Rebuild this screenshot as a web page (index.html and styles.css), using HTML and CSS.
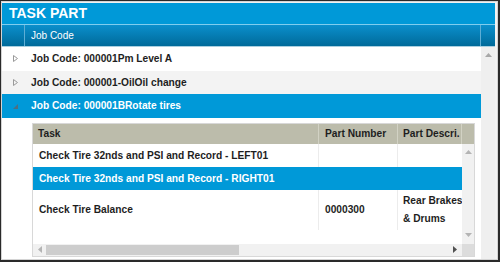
FILE: index.html
```
<!DOCTYPE html>
<html lang="en">
<head>
    <meta charset="UTF-8">
    <title>Task Part</title>
    <link rel="stylesheet" href="styles.css">
</head>
<body>
<div class="frame">
  <div class="panel">
    <div class="title">TASK PART</div>
    <div class="grid-head">
      <div class="hcell expand-col"></div>
      <div class="hcell grow">Job Code</div>
      <div class="hcell scroll-col"></div>
    </div>
    <div class="grid-body">
      <div class="grid-rows">
        <div class="row">
          <div class="expander">
            <svg width="5" height="7" viewBox="0 0 5 7"><path d="M0.5 0.5 L4.5 3.5 L0.5 6.5 Z" fill="none" stroke="#9a9a9a" stroke-width="1"/></svg>
          </div>
          <div class="row-text">Job Code: 000001Pm Level A</div>
        </div>
        <div class="row alt">
          <div class="expander">
            <svg width="5" height="7" viewBox="0 0 5 7"><path d="M0.5 0.5 L4.5 3.5 L0.5 6.5 Z" fill="none" stroke="#9a9a9a" stroke-width="1"/></svg>
          </div>
          <div class="row-text">Job Code: 000001-OilOil change</div>
        </div>
        <div class="row selected">
          <div class="expander">
            <svg width="5" height="5" viewBox="0 0 5 5"><path d="M5 0 L5 5 L0 5 Z" fill="#4f6f80"/></svg>
          </div>
          <div class="row-text">Job Code: 000001BRotate tires</div>
        </div>
        <div class="detail">
          <div class="sub">
            <div class="sub-head">
              <div class="shcell c-task">Task</div>
              <div class="shcell c-num">Part Number</div>
              <div class="shcell c-desc">Part Descri.</div>
              <div class="shcell c-scroll"></div>
            </div>
            <div class="sub-body">
              <div class="sub-rows">
                <div class="srow">
                  <div class="scell c-task">Check Tire 32nds and PSI and Record - LEFT01</div>
                  <div class="scell c-num"></div>
                  <div class="scell c-desc"></div>
                </div>
                <div class="srow selected">
                  <div class="scell c-task">Check Tire 32nds and PSI and Record - RIGHT01</div>
                  <div class="scell c-num"></div>
                  <div class="scell c-desc"></div>
                </div>
                <div class="srow tall">
                  <div class="scell c-task">Check Tire Balance</div>
                  <div class="scell c-num">0000300</div>
                  <div class="scell c-desc"><span class="wrap">Rear Brakes &amp; Drums</span></div>
                </div>
              </div>
              <div class="sub-vscroll">
                <svg width="7" height="4" viewBox="0 0 7 4"><path d="M0 4 L3.5 0 L7 4 Z" fill="#b4b4b4"/></svg>
                <svg width="7" height="4" viewBox="0 0 7 4"><path d="M0 0 L3.5 4 L7 0 Z" fill="#b4b4b4"/></svg>
              </div>
            </div>
            <div class="sub-hscroll">
              <div class="htrack">
                <svg class="arrow-left" width="4" height="7" viewBox="0 0 4 7"><path d="M4 0 L0 3.5 L4 7 Z" fill="#b4b4b4"/></svg>
                <div class="thumb"></div>
                <svg class="arrow-right" width="4" height="7" viewBox="0 0 4 7"><path d="M0 0 L4 3.5 L0 7 Z" fill="#505050"/></svg>
              </div>
              <div class="corner"></div>
            </div>
          </div>
        </div>
      </div>
      <div class="vscroll">
        <svg width="7" height="4" viewBox="0 0 7 4"><path d="M0 4 L3.5 0 L7 4 Z" fill="#a8a8a8"/></svg>
      </div>
    </div>
  </div>
</div>
</body>
</html>
```
FILE: styles.css
```
body {
    margin: 0;
    font-family: "Liberation Sans", Arial, sans-serif;
}
.frame {
    width: 500px;
    height: 262px;
    box-sizing: border-box;
    border-style: solid;
    border-color: #2a2a2a;
    border-width: 1px 2px 2px 1px;
    overflow: hidden;
}
.panel {
    height: 100%;
    box-sizing: border-box;
    border: 1px solid #d4d4d4;
    padding: 1px 2px 0 0;
    background: #f2f2f2;
    display: flex;
    flex-direction: column;
}
.title {
    height: 21px;
    line-height: 21px;
    padding-left: 7px;
    background: #0099d8;
    color: #fff;
    font-size: 14px;
    font-weight: bold;
    border-bottom: 1px solid #7fcdee;
}
.grid-head {
    display: flex;
    height: 21px;
    background: linear-gradient(#0a8fcc, #006a9a);
    border-bottom: 1px solid #a9cfe0;
}
.hcell {
    line-height: 21px;
    color: #fff;
    font-size: 10px;
}
.expand-col {
    width: 22px;
    border-right: 1px solid #5eaed5;
}
.grow {
    flex: 1;
    padding-left: 6px;
}
.scroll-col {
    width: 14px;
    border-left: 1px solid #5eaed5;
}
.grid-body {
    flex: 1;
    display: flex;
    min-height: 0;
}
.grid-rows {
    flex: 1;
    background: #fff;
    overflow: hidden;
}
.row {
    display: flex;
    height: 23.5px;
    line-height: 23.5px;
    font-size: 10.2px;
    font-weight: bold;
    color: #1e1e1e;
}
.row.alt {
    background: #f3f3f3;
}
.row.selected {
    background: #0099d8;
    color: #fff;
}
.expander {
    width: 23px;
    display: flex;
    align-items: center;
    justify-content: center;
    padding-left: 3px;
    box-sizing: border-box;
}
.row.selected .expander {
    padding-top: 2px;
}
.row-text {
    padding-left: 6px;
}
.vscroll {
    width: 14px;
    background: #efefef;
    display: flex;
    justify-content: center;
    padding-top: 6px;
    box-sizing: border-box;
}
.detail {
    padding: 5px 6px 0 30px;
}
.sub {
    border: 1px solid #d8d8d8;
    font-size: 10.2px;
    font-weight: bold;
    color: #1e1e1e;
}
.sub-head {
    display: flex;
    height: 20px;
    background: #bcbcab;
}
.shcell {
    line-height: 20px;
    padding-left: 5px;
    box-sizing: border-box;
    border-right: 1px solid #d2d2c4;
    white-space: nowrap;
    overflow: hidden;
}
.c-task { width: 286px; }
.c-num { width: 79px; padding-left: 6px; }
.c-desc { width: 64px; }
.shcell.c-scroll {
    flex: 1;
    border-right: none;
}
.sub-body {
    display: flex;
    height: 100px;
}
.sub-rows {
    width: 429px;
    overflow: hidden;
}
.srow {
    display: flex;
    height: 23px;
}
.srow.tall {
    height: 40px;
}
.srow.selected {
    background: #0099d8;
    color: #fff;
}
.scell {
    box-sizing: border-box;
    padding-left: 6px;
    border-right: 1px solid #ececec;
    display: flex;
    align-items: center;
    white-space: nowrap;
    overflow: hidden;
}
.srow.selected .scell {
    border-right-color: #0099d8;
}
.scell.c-desc {
    padding-left: 5px;
    border-right: none;
}
.wrap {
    display: block;
    flex: none;
    width: 66px;
    white-space: normal;
    line-height: 18px;
}
.sub-vscroll {
    flex: 1;
    background: #f1f1f1;
    display: flex;
    flex-direction: column;
    justify-content: space-between;
    align-items: center;
    padding: 6px 0 7px;
}
.sub-hscroll {
    display: flex;
    height: 12px;
}
.htrack {
    width: 429px;
    background: #f1f1f1;
    display: flex;
    align-items: center;
    padding-left: 5px;
    box-sizing: border-box;
}
.thumb {
    width: 193px;
    height: 10px;
    background: #cdcdcd;
    margin-left: 4px;
}
.arrow-right {
    margin-left: auto;
    margin-right: 5px;
}
.corner {
    flex: 1;
    background: #dcdcdc;
}
```
